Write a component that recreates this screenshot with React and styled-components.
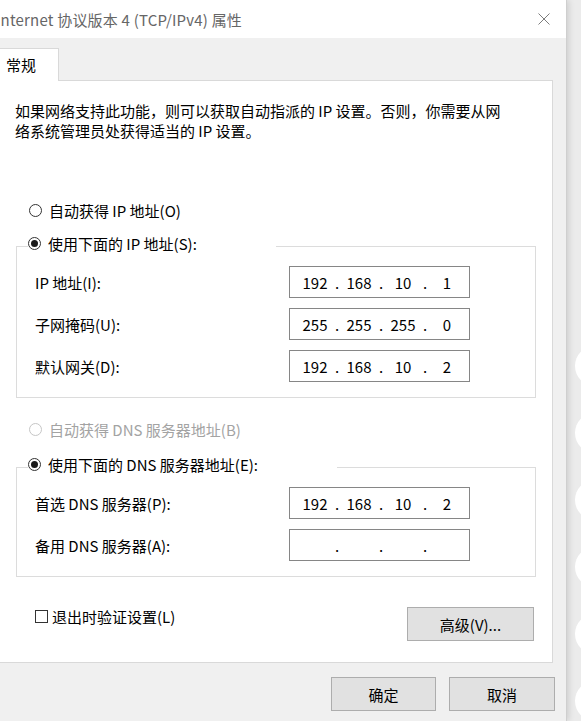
import React from 'react'
import styled, { createGlobalStyle } from 'styled-components'

const GlobalStyle = createGlobalStyle`
  html, body {
    margin: 0;
    padding: 0;
  }
  body {
    width: 581px;
    height: 721px;
    overflow: hidden;
    background: #ebebeb;
    font-family: "Noto Sans CJK SC", "Noto Sans", sans-serif;
    font-size: 15px;
    color: #000;
  }
`

const Desktop = styled.div`
  position: relative;
  width: 581px;
  height: 721px;
  overflow: hidden;
  background: #ebebeb;
`

const Bubble = styled.div`
  position: absolute;
  left: 575px;
  width: 40px;
  height: 40px;
  border-radius: 50%;
  background: #fff;
`

const Window = styled.div`
  position: relative;
  z-index: 1;
  width: 574px;
  height: 721px;
  margin-left: -8px;
  background: #f0f0f0;
  box-shadow: 1px 0 0 #cfcfcf, 3px 0 6px rgba(0, 0, 0, 0.12);
  display: flex;
  flex-direction: column;
`

const TitleBar = styled.div`
  height: 38px;
  flex: none;
  background: #fff;
  display: flex;
  align-items: center;
  justify-content: space-between;
  padding: 0 16px 0 4px;
`

const Title = styled.span`
  color: #666;
  white-space: nowrap;
  letter-spacing: 0.2px;
`

const Body = styled.div`
  padding: 10px 13px 0 6px;
  display: flex;
  flex-direction: column;
`

const TabStrip = styled.div`
  display: flex;
`

const Tab = styled.div`
  position: relative;
  z-index: 1;
  width: 61px;
  height: 33px;
  margin-bottom: -1px;
  box-sizing: border-box;
  padding-left: 7px;
  line-height: 31px;
  background: #fff;
  border: 1px solid #d9d9d9;
  border-bottom: none;
`

const Panel = styled.div`
  height: 583px;
  box-sizing: border-box;
  background: #fff;
  border: 1px solid #d9d9d9;
  padding: 20px 16px 0 17px;
  display: flex;
  flex-direction: column;
`

const Intro = styled.p`
  margin: 0 0 0 -1px;
  line-height: 20px;
  white-space: nowrap;
`

const Option = styled.label`
  display: flex;
  align-items: center;
  gap: ${p => p.$gap ?? 7}px;
  height: 20px;
  margin-left: ${p => p.$indent ?? 13}px;
  margin-top: ${p => p.$top ?? 0}px;
  color: ${p => (p.$disabled ? '#a3a3a3' : '#000')};
  white-space: nowrap;
`

const RadioDot = styled.span`
  width: 13px;
  height: 13px;
  box-sizing: border-box;
  border-radius: 50%;
  border: 1px solid ${p => (p.$disabled ? '#c6c6c6' : '#333')};
  background: #fff;
  display: flex;
  align-items: center;
  justify-content: center;
  flex: none;

  &::after {
    content: '';
    display: ${p => (p.$checked ? 'block' : 'none')};
    width: 7px;
    height: 7px;
    border-radius: 50%;
    background: #1a1a1a;
  }
`

const CheckBox = styled.span`
  width: 13px;
  height: 13px;
  box-sizing: border-box;
  border: 1px solid #333;
  background: #fff;
  flex: none;
`

const Group = styled.fieldset`
  margin: ${p => p.$top}px 0 0 0;
  min-width: 0;
  border: 1px solid #dcdcdc;
  padding: 7px 18px ${p => p.$bottom}px 18px;
`

const Legend = styled.legend`
  width: ${p => p.$width}px;
  box-sizing: border-box;
  padding: 0 0 6px 0;
  margin-left: -7px;
`

const Fields = styled.div`
  display: grid;
  grid-template-columns: 254px 181px;
  grid-auto-rows: 32px;
  row-gap: 10px;
  align-items: center;
`

const FieldLabel = styled.span`
  white-space: nowrap;
`

const IpBox = styled.div`
  height: 32px;
  box-sizing: border-box;
  border: 1px solid #868686;
  background: #fff;
  display: flex;
  align-items: center;
  padding-left: 6px;
`

const Octet = styled.span`
  width: 38px;
  text-align: center;
`

const Dot = styled.span`
  width: 6px;
  text-align: center;
`

const BottomRow = styled.div`
  display: flex;
  justify-content: space-between;
  align-items: flex-start;
  margin-top: 30px;
`

const Button = styled.button`
  width: ${p => p.$w}px;
  height: 34px;
  box-sizing: border-box;
  background: #e1e1e1;
  border: 1px solid #adadad;
  font-family: inherit;
  font-size: 15px;
  color: #000;
  padding: 0;
  margin-right: ${p => p.$mr ?? 0}px;
`

const Footer = styled.div`
  display: flex;
  justify-content: flex-end;
  gap: 13px;
  margin: 14px -2px 0 0;
`

const CloseIcon = () => (
  <svg width="12" height="12" viewBox="0 0 12 12">
    <path d="M0.5 0.5 L11.5 11.5 M11.5 0.5 L0.5 11.5" stroke="#7d7d7d" strokeWidth="1" fill="none" />
  </svg>
)

const IpField = ({ value }) => {
  const parts = value ? value.split('.') : ['', '', '', '']
  return (
    <IpBox>
      {parts.map((p, i) => (
        <React.Fragment key={i}>
          <Octet>{p}</Octet>
          {i < 3 && <Dot>.</Dot>}
        </React.Fragment>
      ))}
    </IpBox>
  )
}

const ipRows = [
  ['IP 地址(I):', '192.168.10.1'],
  ['子网掩码(U):', '255.255.255.0'],
  ['默认网关(D):', '192.168.10.2'],
]

const dnsRows = [
  ['首选 DNS 服务器(P):', '192.168.10.2'],
  ['备用 DNS 服务器(A):', ''],
]

const bubbles = [346, 413, 480, 547, 614, 681]

export default function App() {
  return (
    <Desktop>
      <GlobalStyle />
      {bubbles.map(y => (
        <Bubble key={y} style={{ top: y }} />
      ))}
      <Window>
        <TitleBar>
          <Title>Internet 协议版本 4 (TCP/IPv4) 属性</Title>
          <CloseIcon />
        </TitleBar>
        <Body>
          <TabStrip>
            <Tab>常规</Tab>
          </TabStrip>
          <Panel>
            <Intro>
              如果网络支持此功能，则可以获取自动指派的 IP 设置。否则，你需要从网
              <br />
              络系统管理员处获得适当的 IP 设置。
            </Intro>

            <Option $top={59}>
              <RadioDot />
              自动获得 IP 地址(O)
            </Option>

            <Group $top={13} $bottom={15}>
              <Legend $width={248}>
                <Option $indent={0}>
                  <RadioDot $checked />
                  使用下面的 IP 地址(S):
                </Option>
              </Legend>
              <Fields>
                {ipRows.map(([label, ip]) => (
                  <React.Fragment key={label}>
                    <FieldLabel>{label}</FieldLabel>
                    <IpField value={ip} />
                  </React.Fragment>
                ))}
              </Fields>
            </Group>

            <Option $top={21} $disabled>
              <RadioDot $disabled />
              自动获得 DNS 服务器地址(B)
            </Option>

            <Group $top={15} $bottom={15}>
              <Legend $width={309}>
                <Option $indent={0}>
                  <RadioDot $checked />
                  使用下面的 DNS 服务器地址(E):
                </Option>
              </Legend>
              <Fields>
                {dnsRows.map(([label, ip]) => (
                  <React.Fragment key={label}>
                    <FieldLabel>{label}</FieldLabel>
                    <IpField value={ip} />
                  </React.Fragment>
                ))}
              </Fields>
            </Group>

            <BottomRow>
              <Option $indent={19} $gap={4} $top={-1}>
                <CheckBox />
                退出时验证设置(L)
              </Option>
              <Button $w={127} $mr={2}>高级(V)...</Button>
            </BottomRow>
          </Panel>
          <Footer>
            <Button $w={105}>确定</Button>
            <Button $w={106}>取消</Button>
          </Footer>
        </Body>
      </Window>
    </Desktop>
  )
}
